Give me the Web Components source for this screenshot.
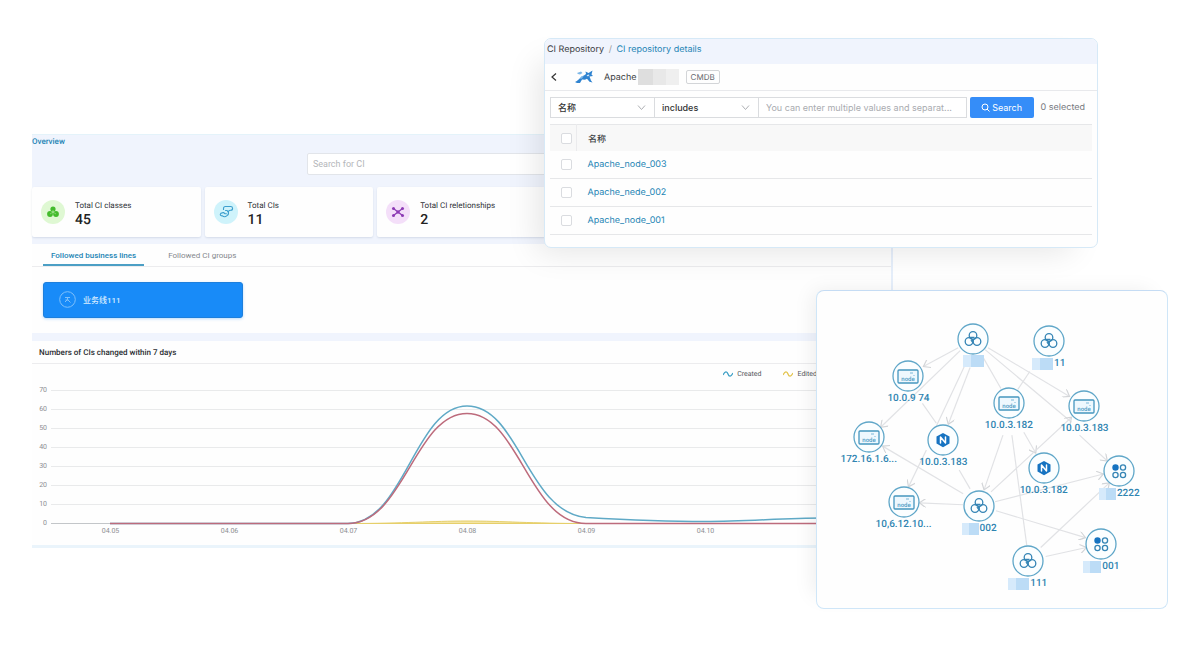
<!DOCTYPE html>
<html lang="en">
<head>
    <meta charset="UTF-8">
    <meta name="viewport" content="width=device-width, initial-scale=1.0">
    <title>CMDB Overview</title>
    <style>
        body {
            margin: 0;
            background: #fff;
            color: #3a3d42;
            font-family: Roboto, "Noto Sans CJK SC", sans-serif;
            font-size: 8px;
            text-rendering: geometricPrecision;
            --link: #2485b5;
            --blue: #188bf8;
            --tint: #f0f4fd;
            --line: #ececee;
        }
    </style>
</head>
<body>
    <cmdb-stage>
        <cmdb-overview slot="overview">
            <stat-card slot="stats" label="Total CI classes" value="45" kind="classes"></stat-card>
            <stat-card slot="stats" label="Total CIs" value="11" kind="items"></stat-card>
            <stat-card slot="stats" label="Total CI reletionships" value="2" kind="relations"></stat-card>
            <follow-tabs slot="follow">业务线111</follow-tabs>
            <change-chart slot="chart">Numbers of CIs changed within 7 days</change-chart>
        </cmdb-overview>
        <ci-repository slot="repository">Apache</ci-repository>
        <ci-topology slot="topology"></ci-topology>
    </cmdb-stage>

    <script>
        // Attaches an open shadow root and fills it
        class BaseElement extends HTMLElement {
            constructor() {
                super();
                this.attachShadow({ mode: 'open' });
            }

            connectedCallback() {
                this.shadowRoot.innerHTML = this.render();
            }
        }

        // Three panels that overlap on a shared grid
        class CmdbStage extends BaseElement {
            render() {
                return `
                    <style>
                        :host {
                            display: grid;
                            padding: 38px 32px;
                            grid-template-columns: 512fr 272fr 77fr 205fr 70fr;
                            grid-template-rows: 96px 114px 42px minmax(258px, auto) minmax(61px, auto);
                        }
                        slot {
                            display: grid;
                            min-width: 0;
                        }
                        .overview {
                            grid-area: 2 / 1 / 5 / 4;
                        }
                        .repository {
                            grid-area: 1 / 2 / 3 / 5;
                            z-index: 1;
                        }
                        .topology {
                            grid-area: 4 / 3 / 6 / 6;
                            z-index: 2;
                        }
                    </style>
                    <slot class="overview" name="overview"></slot>
                    <slot class="repository" name="repository"></slot>
                    <slot class="topology" name="topology"></slot>
                `;
            }
        }

        class CmdbOverview extends BaseElement {
            render() {
                return `
                    <style>
                        :host {
                            display: flex;
                            flex-direction: column;
                            box-sizing: border-box;
                            min-width: 0;
                            background: var(--tint);
                            border-top: 1px solid #e4f3fa;
                            border-right: 2px solid #e6effb;
                            border-bottom: 3px solid #eaf4fb;
                        }
                        h1 {
                            margin: 0;
                            font-size: 8px;
                            line-height: 14px;
                            font-weight: 500;
                            color: var(--link);
                        }
                        .search {
                            display: block;
                            box-sizing: border-box;
                            width: 36%;
                            height: 22px;
                            margin: 4px auto 12px;
                            padding: 0 5px;
                            border: 1px solid #e2e5ea;
                            border-radius: 2px;
                            background: #fff;
                            font: inherit;
                            font-size: 9px;
                        }
                        .search::placeholder {
                            color: #b4b6ba;
                        }
                        .stats {
                            display: grid;
                            grid-template-columns: repeat(5, 1fr);
                            gap: 4px;
                            margin-bottom: 7px;
                        }
                        .follow {
                            display: block;
                            margin-bottom: 8px;
                        }
                        .chart {
                            display: block;
                            flex: 1;
                            background: #fefefe;
                        }
                    </style>
                    <h1>Overview</h1>
                    <input class="search" type="search" placeholder="Search for CI" aria-label="Search for CI">
                    <div class="stats"><slot name="stats"></slot></div>
                    <slot class="follow" name="follow"></slot>
                    <slot class="chart" name="chart"></slot>
                `;
            }
        }

        const STAT_ICONS = {
            classes: {
                back: '#dff8d3',
                svg: `<g fill="#43bb2c"><circle cx="12" cy="9" r="2.600"/><circle cx="9" cy="14" r="2.900"/><circle cx="15" cy="14" r="2.900"/></g>
                      <path d="M12 10v2l-3 2M12 12l3 2" stroke="#9ce287" stroke-width=".7" fill="none"/>`
            },
            items: {
                back: '#cff3fb',
                svg: `<g fill="none" stroke="#3d9fce" stroke-width="1.100" stroke-linejoin="round">
                      <path d="M9.500 10V8.500a2 2 0 0 1 2-2h5a1.900 1.900 0 0 1 .3 3.800l-1.500.2-1.200 1.500-1-1.500h-2"/>
                      <path d="M14 10.600c1 2.400.8 3.900-1 5-1.500 1.300-3.500 1.200-4.500.2-2.700.4-3-2.600-.5-2.900l1.500-.4 1.500 1.200h1.800"/></g>`
            },
            relations: {
                back: '#f4dff9',
                svg: `<path d="M7.500 8.500l9 7M16.500 8.500l-9 7" stroke="#8d3bb4" stroke-width="1.300"/>
                      <g fill="#8d3bb4"><circle cx="7.500" cy="8.500" r="1.500"/><circle cx="16.500" cy="8.500" r="1.500"/><circle cx="7.500" cy="15.500" r="1.500"/><circle cx="16.500" cy="15.500" r="1.500"/><circle cx="12" cy="12" r="1.700"/></g>`
            }
        };

        class StatCard extends BaseElement {
            render() {
                const icon = STAT_ICONS[this.getAttribute('kind')];
                return `
                    <style>
                        :host {
                            display: flex;
                            align-items: center;
                            gap: 10px;
                            box-sizing: border-box;
                            height: 50px;
                            padding: 0 9px;
                            background: #fefefe;
                            border-radius: 2px;
                            box-shadow: 0 1px 2px rgba(60, 80, 120, 0.15);
                        }
                        svg {
                            width: 24px;
                            height: 24px;
                            border-radius: 50%;
                            background: ${icon.back};
                        }
                        dl, dt, dd {
                            margin: 0;
                        }
                        dl {
                            padding-top: 3px;
                        }
                        dt {
                            font-size: 8px;
                            line-height: 12px;
                            color: #2f3237;
                        }
                        dd {
                            font-size: 14px;
                            line-height: 16px;
                            font-weight: 500;
                            color: #222;
                        }
                    </style>
                    <svg viewBox="0 0 24 24" aria-hidden="true">${icon.svg}</svg>
                    <dl>
                        <dt>${this.getAttribute('label')}</dt>
                        <dd>${this.getAttribute('value')}</dd>
                    </dl>
                `;
            }
        }

        class FollowTabs extends BaseElement {
            render() {
                return `
                    <style>
                        :host {
                            display: block;
                            background: #fefefe;
                        }
                        nav {
                            display: flex;
                            gap: 16px;
                            padding: 0 11px;
                            border-bottom: 1px solid var(--line);
                        }
                        .tab {
                            padding: 4px 8px 0;
                            border: 0;
                            border-bottom: 2px solid transparent;
                            background: none;
                            color: #85888d;
                            font: inherit;
                            line-height: 16px;
                            cursor: pointer;
                        }
                        .tab.active {
                            color: var(--link);
                            border-color: #4c9fc5;
                            font-weight: 500;
                        }
                        .body {
                            padding: 15px 11px;
                        }
                        .line {
                            display: flex;
                            align-items: center;
                            gap: 7px;
                            width: 200px;
                            height: 36px;
                            padding: 0 15px 2px;
                            border: 1px solid #1d7fdc;
                            border-radius: 3px;
                            background: var(--blue);
                            box-shadow: 0 1px 3px rgba(24, 139, 248, 0.3);
                            color: #d6ebff;
                            font: inherit;
                            font-weight: 500;
                            cursor: pointer;
                        }
                        .line svg {
                            width: 17px;
                            height: 17px;
                        }
                    </style>
                    <nav>
                        <button class="tab active" type="button">Followed business lines</button>
                        <button class="tab" type="button">Followed CI groups</button>
                    </nav>
                    <div class="body">
                        <button class="line" type="button">
                            <svg viewBox="0 0 17 17" fill="none" stroke="#7fc0fb" aria-hidden="true">
                                <circle cx="8.5" cy="8.5" r="7.8"/>
                                <path d="M6 6.500h5M8.500 6.500v2L6 11M8.500 8.500l3 3M6.500 9h3"/>
                            </svg>
                            <slot></slot>
                        </button>
                    </div>
                `;
            }
        }

        class ChangeChart extends BaseElement {
            render() {
                const ticks = [70, 60, 50, 40, 30, 20, 10, 0];
                const days = ['04.05', '04.06', '04.07', '04.08', '04.09', '04.10'];
                const grid = ticks.slice(0, -1).map((t, i) =>
                    `<path d="M0 ${9.5 + i * 19}H833" stroke="#e9eaeb"/>`).join('');
                return `
                    <style>
                        :host {
                            display: block;
                        }
                        h2 {
                            margin: 0;
                            padding: 2px 7px 0;
                            border-bottom: 1px solid var(--line);
                            font-size: 8px;
                            line-height: 20px;
                            font-weight: 500;
                            color: #2a2d31;
                        }
                        .legend {
                            display: flex;
                            justify-content: flex-end;
                            gap: 22px;
                            padding: 5px 74px 2px 0;
                            font-size: 7px;
                            line-height: 10px;
                            color: #55585d;
                        }
                        .legend span {
                            display: flex;
                            align-items: center;
                            gap: 4px;
                        }
                        .legend svg {
                            width: 10px;
                            height: 6px;
                            fill: none;
                            stroke-width: 1.300;
                        }
                        .plot {
                            display: grid;
                            grid-template-columns: 15px 1fr;
                            column-gap: 4px;
                            padding-right: 7px;
                            font-size: 7px;
                            color: #8b8d91;
                        }
                        .ticks {
                            text-align: right;
                            line-height: 19px;
                        }
                        .curves {
                            width: 100%;
                            height: 152px;
                            fill: none;
                        }
                        .curves path {
                            vector-effect: non-scaling-stroke;
                        }
                        .days {
                            grid-column: 2;
                            display: grid;
                            grid-template-columns: repeat(7, 1fr);
                            margin-top: -6px;
                            line-height: 8px;
                            text-align: center;
                        }
                    </style>
                    <h2><slot></slot></h2>
                    <div class="legend">
                        <span><svg viewBox="0 0 10 6" stroke="#3fa0c6"><path d="M0 4C2 0 4 0 5 3S8 6 10 2"/></svg>Created</span>
                        <span><svg viewBox="0 0 10 6" stroke="#e3c44e"><path d="M0 4C2 0 4 0 5 3S8 6 10 2"/></svg>Edited</span>
                    </div>
                    <div class="plot">
                        <div class="ticks">${ticks.map(t => `<div>${t}</div>`).join('')}</div>
                        <svg class="curves" viewBox="0 0 833 152" preserveAspectRatio="none" role="img" aria-label="CI changes per day">
                            ${grid}
                            <path d="M0 142.500H833" stroke="#c3c6c9"/>
                            <path d="M297 142.500C355 142.500 380 140 416 140S480 142.500 535 142.500Z" fill="#f3e4a4" stroke="#e6cf6a"/>
                            <path d="M59 142.500H297C353 142.500 364 25 416 25S476 131 535 136.500C570 138.500 610 140.500 654 140.500S730 137 773 137" stroke="#5fa9c6" stroke-width="1.500"/>
                            <path d="M59 142.500H297C353 142.500 364 32.500 416 32.500S478 142.500 535 142.500H773" stroke="#bd6b7c" stroke-width="1.500"/>
                        </svg>
                        <div class="days">${days.map(d => `<span>${d}</span>`).join('')}</div>
                    </div>
                `;
            }
        }

        class CiRepository extends BaseElement {
            render() {
                const nodes = ['Apache_node_003', 'Apache_nede_002', 'Apache_node_001'];
                return `
                    <style>
                        :host {
                            display: block;
                            box-sizing: border-box;
                            min-width: 0;
                            overflow: hidden;
                            border: 1px solid #d6e9f7;
                            border-radius: 7px;
                            background: #fefefe;
                            box-shadow: -16px 14px 30px -10px rgba(0, 0, 0, 0.1);
                            font-family: Inter, "Noto Sans CJK SC", sans-serif;
                            font-size: 9px;
                        }
                        a {
                            color: var(--link);
                            text-decoration: none;
                        }
                        .crumbs {
                            padding: 0 2px;
                            background: var(--tint);
                            line-height: 21px;
                            padding-bottom: 4px;
                        }
                        .crumbs i {
                            padding: 0 2px;
                            font-style: normal;
                            color: #999;
                        }
                        .title {
                            display: flex;
                            align-items: center;
                            height: 26px;
                            padding-left: 4px;
                            border-bottom: 1px solid #e8e9ec;
                        }
                        .back {
                            display: flex;
                            padding: 0;
                            border: 0;
                            background: none;
                        }
                        .back svg {
                            width: 10px;
                            height: 10px;
                        }
                        .logo {
                            width: 20px;
                            height: 16px;
                            margin: 0 10px 0 15px;
                        }
                        .mask {
                            width: 41px;
                            height: 16px;
                            margin: 0 7px 0 1px;
                            background: linear-gradient(90deg, #dedede 15px, #e8e8e8 15px 28px, #efefef 28px);
                        }
                        .tag {
                            padding: 0 4px;
                            border: 1px solid #d3d5d8;
                            border-radius: 2px;
                            font-size: 8px;
                            line-height: 12px;
                            color: #66696e;
                        }
                        .filter {
                            display: flex;
                            align-items: center;
                            padding: 6px 5px;
                        }
                        .field {
                            position: relative;
                            display: flex;
                            flex: 0 0 104px;
                        }
                        .field svg {
                            position: absolute;
                            top: 7px;
                            right: 8px;
                            width: 9px;
                            height: 7px;
                            pointer-events: none;
                        }
                        select, .values {
                            box-sizing: border-box;
                            width: 100%;
                            height: 21px;
                            padding: 0 7px;
                            border: 1px solid #dadcdf;
                            border-right-width: 0;
                            border-radius: 0;
                            background: #fff;
                            color: #333;
                            font: inherit;
                            appearance: none;
                        }
                        select {
                            font-weight: 500;
                        }
                        .values {
                            flex: 1;
                            min-width: 0;
                            border-right-width: 1px;
                            text-overflow: ellipsis;
                        }
                        .values::placeholder {
                            color: #a9abaf;
                        }
                        .go {
                            display: flex;
                            align-items: center;
                            justify-content: center;
                            gap: 2px;
                            width: 64px;
                            height: 21px;
                            margin: 0 7px 0 3px;
                            border: 0;
                            border-radius: 2px;
                            background: #358df8;
                            color: #fff;
                            font: inherit;
                        }
                        .go svg {
                            width: 9px;
                            height: 9px;
                        }
                        .count {
                            padding-right: 7px;
                            color: #77797e;
                            white-space: nowrap;
                        }
                        table {
                            width: calc(100% - 10px);
                            margin: 0 5px;
                            border-collapse: collapse;
                        }
                        th, td {
                            height: 27px;
                            padding: 0;
                            border-bottom: 1px solid #e6e7e9;
                            text-align: left;
                        }
                        th {
                            height: 26px;
                            border-top: 1px solid #e6e7e9;
                            border-bottom: 0;
                            background: #f8f8f8;
                            font-weight: 500;
                        }
                        .pick {
                            width: 26px;
                            text-align: center;
                        }
                        th.pick {
                            border-right: 1px solid #ebebed;
                        }
                        .name {
                            padding-left: 11px;
                        }
                        input[type="checkbox"] {
                            display: block;
                            box-sizing: border-box;
                            width: 11px;
                            height: 11px;
                            margin: 0 4px 0 11px;
                            border: 1px solid #dadce0;
                            border-radius: 2px;
                            background: #fff;
                            appearance: none;
                        }
                    </style>
                    <div class="crumbs">CI Repository <i>/</i> <a href="#details">CI repository details</a></div>
                    <div class="title">
                        <button class="back" type="button" aria-label="Back">
                            <svg viewBox="0 0 10 10" fill="none" stroke="#333" stroke-width="1.200"><path d="M7 1.500L3 5l4 3.500"/></svg>
                        </button>
                        <svg class="logo" viewBox="0 0 20 16" aria-hidden="true">
                            <path fill="#2f83d0" d="M1 13C4 12 6 8 10 6.500L12 5l-.5-2.500 3 1.500L18.500 1.500l-1 4L19 7l-3.500.5 1.500 4 1.500 2-3-.8-2.500-3-2 1-3-.2L6 14H3z"/>
                            <path fill="#7eb8e8" d="M3 4l4-1.500L8.500 4 6 5.500 4 5zM7 7.500l3-1-2 3-2 .5z"/>
                            <path fill="#d8ebf9" d="M12.500 6.500l2-1 1 .5-1.500 1.500z"/>
                        </svg>
                        <slot></slot>
                        <span class="mask"></span>
                        <span class="tag">CMDB</span>
                    </div>
                    <div class="filter">
                        <div class="field">
                            <select aria-label="Attribute"><option>名称</option></select>
                            <svg viewBox="0 0 9 7" fill="none" stroke="#adafb3"><path d="M1 1.500l3.500 4 3.500-4"/></svg>
                        </div>
                        <div class="field">
                            <select aria-label="Operator"><option>includes</option></select>
                            <svg viewBox="0 0 9 7" fill="none" stroke="#adafb3"><path d="M1 1.500l3.500 4 3.500-4"/></svg>
                        </div>
                        <input class="values" type="text" aria-label="Values" placeholder="You can enter multiple values and separat...">
                        <button class="go" type="button">
                            <svg viewBox="0 0 9 9" fill="none" stroke="#fff"><circle cx="4" cy="4" r="3"/><path d="M6 6l2.500 2.500"/></svg>
                            Search
                        </button>
                        <span class="count">0 selected</span>
                    </div>
                    <table>
                        <thead>
                            <tr><th class="pick"><input type="checkbox" aria-label="Select all"></th><th class="name">名称</th></tr>
                        </thead>
                        <tbody>
                            ${nodes.map(n => `<tr><td class="pick"><input type="checkbox" aria-label="${n}"></td><td class="name"><a href="#${n}">${n}</a></td></tr>`).join('')}
                        </tbody>
                    </table>
                `;
            }
        }

        const NODE_ICONS = {
            group: `<g fill="none" stroke="#3585b5" stroke-width="1.300">
                        <circle cx="16" cy="12.500" r="3.800"/><circle cx="12" cy="18.500" r="3.800"/><circle cx="20" cy="18.500" r="3.800"/>
                        <path d="M12.500 14.500h5M14 17l2 3"/></g>`,
            server: `<rect x="6" y="10" width="20" height="13" rx="1" fill="#eef8fe" stroke="#4596bf" stroke-width="1.300"/>
                     <path d="M18 13h3M22 15v1" stroke="#7bb8d8" fill="none"/>
                     <text x="16" y="21" text-anchor="middle" font-size="6" fill="#4a9ac4">node</text>`,
            nginx: `<path d="M16 9l6.500 3.600v7L16 23.200l-6.500-3.600v-7z" fill="#1673c1"/>
                    <path d="M13.500 19v-6l5 6v-6" fill="none" stroke="#fff" stroke-width="1.500" stroke-linejoin="round" stroke-linecap="round"/>`,
            cluster: `<circle cx="12.500" cy="12.500" r="3.200" fill="#1673c1"/>
                      <g fill="none" stroke="#3585b5" stroke-width="1.300"><circle cx="20" cy="12.500" r="2.600"/><circle cx="12.500" cy="20" r="2.600"/><circle cx="20" cy="20" r="2.600"/></g>`
        };

        class CiNode extends BaseElement {
            render() {
                const mask = this.getAttribute('mask');
                return `
                    <style>
                        :host {
                            display: flex;
                            flex-direction: column;
                            align-items: center;
                            width: 80px;
                            color: #2f84b1;
                            font-size: 10px;
                            line-height: 14px;
                            font-weight: 500;
                            white-space: nowrap;
                        }
                        svg {
                            width: 32px;
                            height: 32px;
                        }
                        .label {
                            display: flex;
                            align-items: center;
                            gap: 1px;
                        }
                        .mask {
                            width: ${mask || 0}px;
                            height: 12px;
                            background: linear-gradient(90deg, #d6eafb 40%, #bcdcf6 40%);
                        }
                    </style>
                    <svg viewBox="0 0 32 32" aria-hidden="true">
                        <circle cx="16" cy="16" r="15" fill="#fbfeff" stroke="#5fa6c8" stroke-width="1.300"/>
                        ${NODE_ICONS[this.getAttribute('kind')]}
                    </svg>
                    <div class="label">${mask ? '<span class="mask"></span>' : ''}<slot></slot></div>
                `;
            }
        }

        class CiTopology extends BaseElement {
            render() {
                // centre of each circle on the 352 x 319 canvas
                const nodes = [
                    { x: 157, y: 48, kind: 'group', label: '', mask: 21 },
                    { x: 233, y: 50, kind: 'group', label: '11', mask: 21 },
                    { x: 92, y: 85, kind: 'server', label: '10.0.9 74' },
                    { x: 52, y: 147, kind: 'server', label: '172.16.1.6...' },
                    { x: 127, y: 150, kind: 'nginx', label: '10.0.3.183' },
                    { x: 193, y: 113, kind: 'server', label: '10.0.3.182' },
                    { x: 269, y: 116, kind: 'server', label: '10.0.3.183' },
                    { x: 228, y: 178, kind: 'nginx', label: '10.0.3.182' },
                    { x: 304, y: 181, kind: 'cluster', label: '2222', mask: 17 },
                    { x: 163, y: 216, kind: 'group', label: '002', mask: 17 },
                    { x: 87, y: 212, kind: 'server', label: '10,6.12.10...' },
                    { x: 286, y: 254, kind: 'cluster', label: '001', mask: 18 },
                    { x: 212, y: 272, kind: 'group', label: '111', mask: 21 }
                ];
                const arrows = [
                    'M142 57L107 76', 'M144 60L64 137', 'M154 77L132 134', 'M151 70L119 138M110 160L92 197',
                    'M172 57L254 106', 'M169 59L256 132M264 145L292 171', 'M147 204L66 156',
                    'M147 215L103 213', 'M208 142L220 163', 'M187 145L168 200', 'M175 202L256 127',
                    'M179 212L288 184', 'M180 221L270 248', 'M225 258L294 193', 'M230 267L271 258'
                ];
                const lines = ['M106 113L120 133M143 180L154 199', 'M166 65L185 98', 'M214 81L202 99', 'M196 145L211 256'];
                return `
                    <style>
                        :host {
                            display: block;
                            position: relative;
                            box-sizing: border-box;
                            min-width: 0;
                            border: 1px solid #cfe6f8;
                            border-top-color: #c5dcf4;
                            border-radius: 8px;
                            background: #fefefe;
                            box-shadow: -10px -6px 20px -8px rgba(0, 0, 0, 0.08);
                        }
                        .edges {
                            display: block;
                            width: 100%;
                            height: 100%;
                            fill: none;
                            stroke: #e1e2e5;
                            stroke-width: 1.200;
                        }
                        ci-node {
                            position: absolute;
                            margin: -16px 0 0 -40px;
                        }
                    </style>
                    <svg class="edges" viewBox="0 0 352 319" preserveAspectRatio="none" aria-hidden="true">
                        <marker id="tip" viewBox="0 0 10 10" refX="9" refY="5" markerUnits="userSpaceOnUse" markerWidth="9" markerHeight="9" orient="auto">
                            <path d="M2 0L9 5L2 10" fill="none" stroke="#d3d5d8" stroke-width="1.300"/>
                        </marker>
                        ${arrows.map(d => `<path d="${d}" marker-end="url(#tip)"/>`).join('')}
                        ${lines.map(d => `<path d="${d}"/>`).join('')}
                    </svg>
                    ${nodes.map(n => `<ci-node kind="${n.kind}" ${n.mask ? `mask="${n.mask}"` : ''} style="left:${n.x / 3.52}%;top:${n.y / 3.19}%">${n.label}</ci-node>`).join('')}
                `;
            }
        }

        // Register custom elements
        customElements.define('cmdb-stage', CmdbStage);
        customElements.define('cmdb-overview', CmdbOverview);
        customElements.define('stat-card', StatCard);
        customElements.define('follow-tabs', FollowTabs);
        customElements.define('change-chart', ChangeChart);
        customElements.define('ci-repository', CiRepository);
        customElements.define('ci-node', CiNode);
        customElements.define('ci-topology', CiTopology);
    </script>
</body>
</html>
